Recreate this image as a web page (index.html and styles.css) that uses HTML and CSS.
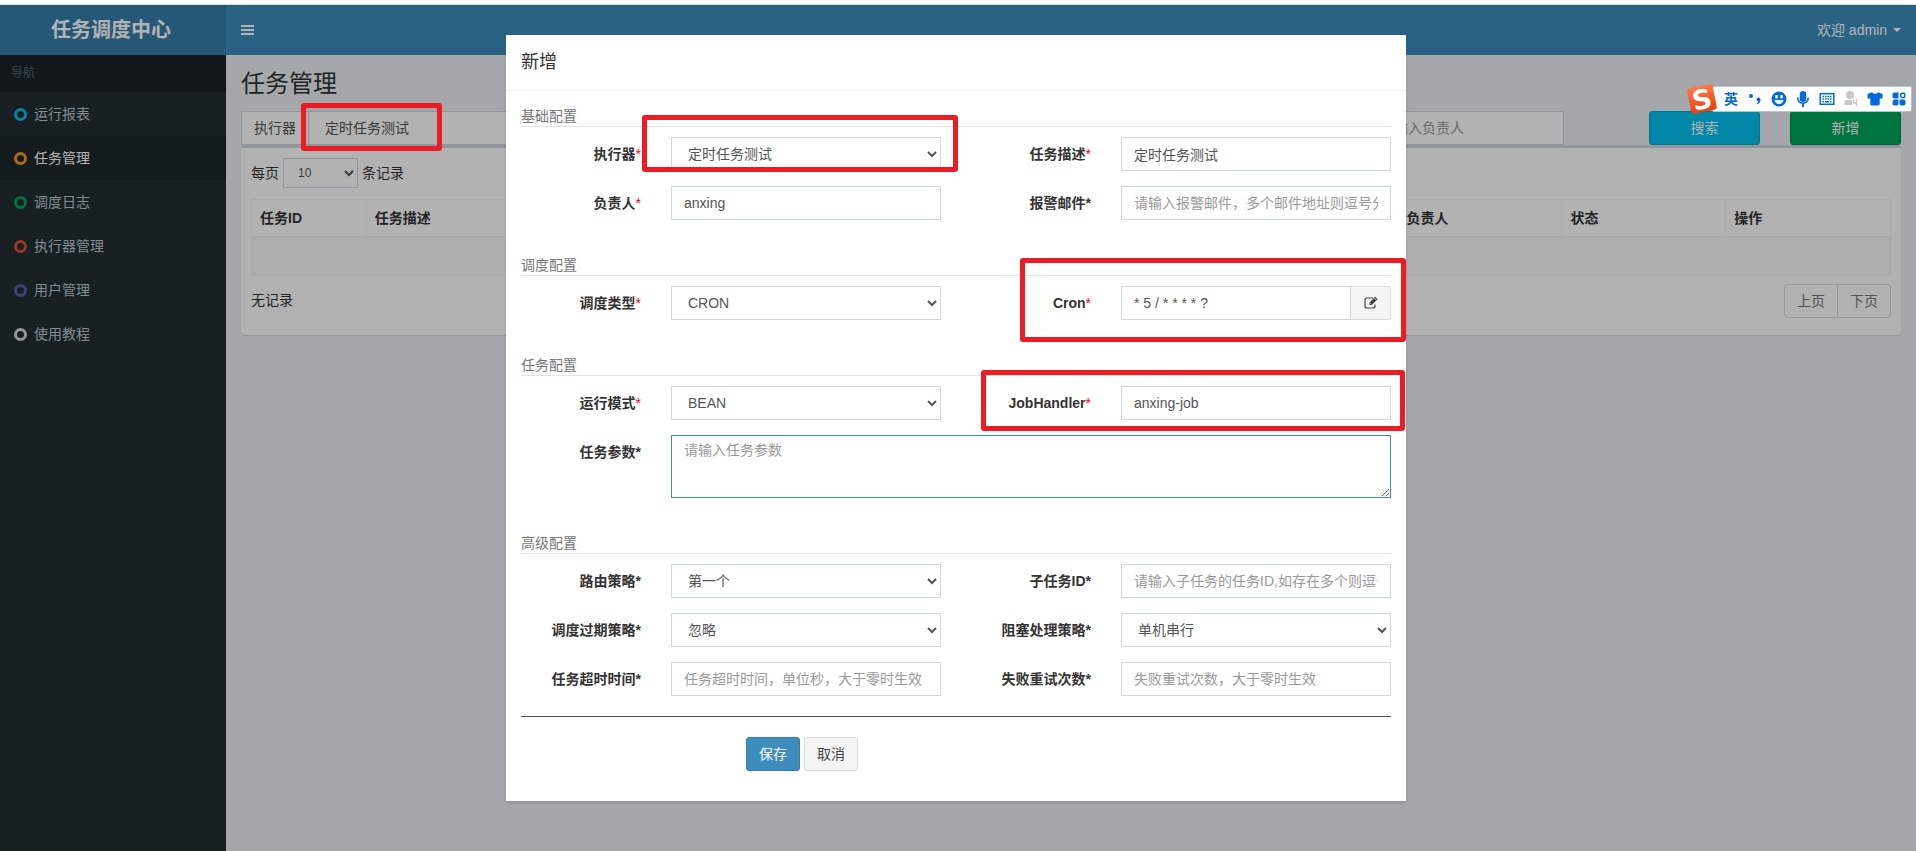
FILE: index.html
```html
<!DOCTYPE html>
<html lang="zh-CN">
<head>
<meta charset="utf-8">
<title>任务调度中心</title>
<link rel="stylesheet" href="styles.css">
</head>
<body>
<div class="app">
  <header class="topbar">
    <a class="logo" href="#">任务调度中心</a>
    <nav class="navbar">
      <button class="toggle" type="button" aria-label="切换导航">
        <svg width="13" height="12" viewBox="0 0 13 12"><path d="M0 1h13v2H0zM0 5h13v2H0zM0 9h13v2H0z" fill="#fff"/></svg>
      </button>
      <a class="user" href="#">欢迎 admin<span class="caret"></span></a>
    </nav>
  </header>

  <div class="columns">
    <aside class="sidebar">
      <div class="nav-head">导航</div>
      <ul class="menu">
        <li><a href="#"><span class="ring aqua"></span>运行报表</a></li>
        <li><a href="#" class="active"><span class="ring yellow"></span>任务管理</a></li>
        <li><a href="#"><span class="ring green"></span>调度日志</a></li>
        <li><a href="#"><span class="ring red"></span>执行器管理</a></li>
        <li><a href="#"><span class="ring purple"></span>用户管理</a></li>
        <li><a href="#"><span class="ring gray"></span>使用教程</a></li>
      </ul>
    </aside>

    <main class="content">
      <h1 class="page-title">任务管理</h1>
      <div class="filters">
        <div class="group">
          <label class="addon" for="f-group">执行器</label>
          <div class="anchor grow">
            <select class="control" id="f-group"><option>定时任务测试</option></select>
            <span class="mark mark-filter"></span>
          </div>
        </div>
        <select class="control" aria-label="状态"><option>全部</option></select>
        <input class="control" type="text" placeholder="请输入任务描述" aria-label="任务描述">
        <input class="control" type="text" placeholder="请输入JobHandler" aria-label="JobHandler">
        <input class="control" type="text" placeholder="请输入负责人" aria-label="负责人">
        <button class="btn info search" type="button">搜索</button>
        <button class="btn success" type="button">新增</button>
      </div>

      <section class="box">
        <div class="length">
          <label for="len">每页</label>
          <select class="control small" id="len"><option>10</option></select>
          <span>条记录</span>
        </div>
        <table class="table">
          <colgroup>
            <col class="c-id"><col class="c-desc"><col class="c-type"><col class="c-mode"><col class="c-std"><col class="c-std"><col class="c-std">
          </colgroup>
          <thead>
            <tr><th>任务ID</th><th>任务描述</th><th>调度类型</th><th>运行模式</th><th>负责人</th><th>状态</th><th>操作</th></tr>
          </thead>
          <tbody><tr><td colspan="7"></td></tr></tbody>
        </table>
        <div class="table-foot">
          <span>无记录</span>
          <div class="pager"><button type="button">上页</button><button type="button">下页</button></div>
        </div>
      </section>
    </main>
  </div>

  <div class="overlay">
    <div class="modal" role="dialog" aria-labelledby="modal-title">
      <h4 class="modal-head" id="modal-title">新增</h4>
      <form class="modal-body">
        <p class="section">基础配置</p>
        <div class="fields">
          <label for="group">执行器<span class="req">*</span></label>
          <div class="anchor">
            <select class="control" id="group"><option>定时任务测试</option></select>
            <span class="mark mark-group"></span>
          </div>
          <label for="desc">任务描述<span class="req">*</span></label>
          <input class="control" id="desc" type="text" value="定时任务测试">
          <label for="author">负责人<span class="req">*</span></label>
          <input class="control" id="author" type="text" value="anxing">
          <label for="mail">报警邮件*</label>
          <input class="control" id="mail" type="text" placeholder="请输入报警邮件，多个邮件地址则逗号分隔">
        </div>

        <p class="section">调度配置</p>
        <div class="fields">
          <label for="stype">调度类型<span class="req">*</span></label>
          <select class="control" id="stype"><option>CRON</option></select>
          <label for="cron">Cron<span class="req">*</span></label>
          <div class="anchor group">
            <input class="control" id="cron" type="text" value="* 5 / * * * * ?">
            <button class="edit" type="button" aria-label="编辑">
              <svg width="14" height="14" viewBox="0 0 14 14" fill="none" stroke="#444">
                <path d="M9 2H3Q1 2 1 4v6Q1 12 3 12h6Q11 12 11 10V8.500" stroke-width="1.200"/>
                <path d="M5.500 6.500l5.700-5.700 2.400 2.400L7.900 8.900H5.500z" fill="#444" stroke="none"/>
                <path d="M6.300 7.300l.9.900M10.300 2.200l1.900 1.900" stroke="#f4f4f4" stroke-width=".7"/>
              </svg>
            </button>
            <span class="mark mark-cron"></span>
          </div>
        </div>

        <p class="section">任务配置</p>
        <div class="fields">
          <label for="mode">运行模式<span class="req">*</span></label>
          <select class="control" id="mode"><option>BEAN</option></select>
          <label for="handler">JobHandler<span class="req">*</span></label>
          <div class="anchor">
            <input class="control" id="handler" type="text" value="anxing-job">
            <span class="mark mark-handler"></span>
          </div>
          <label for="param">任务参数*</label>
          <textarea class="control wide" id="param" placeholder="请输入任务参数"></textarea>
        </div>

        <p class="section">高级配置</p>
        <div class="fields">
          <label for="route">路由策略*</label>
          <select class="control" id="route"><option>第一个</option></select>
          <label for="child">子任务ID*</label>
          <input class="control" id="child" type="text" placeholder="请输入子任务的任务ID,如存在多个则逗号分隔">
          <label for="misfire">调度过期策略*</label>
          <select class="control" id="misfire"><option>忽略</option></select>
          <label for="block">阻塞处理策略*</label>
          <select class="control" id="block"><option>单机串行</option></select>
          <label for="timeout">任务超时时间*</label>
          <input class="control" id="timeout" type="text" placeholder="任务超时时间，单位秒，大于零时生效">
          <label for="retry">失败重试次数*</label>
          <input class="control" id="retry" type="text" placeholder="失败重试次数，大于零时生效">
        </div>

        <hr class="rule">
        <div class="actions">
          <button class="btn primary" type="button">保存</button>
          <button class="btn plain" type="button">取消</button>
        </div>
      </form>
    </div>
  </div>

  <div class="ime">
    <svg class="ime-logo" width="34" height="32" viewBox="0 0 34 32">
      <defs><linearGradient id="flame" x1="0" y1="0" x2="0" y2="1"><stop offset="0" stop-color="#ff7a45"/><stop offset="1" stop-color="#ea3f0c"/></linearGradient></defs>
      <g transform="rotate(-11 17 16)">
        <rect x="4" y="3" width="26" height="26" rx="3" fill="url(#flame)"/>
        <text class="ime-s" x="17" y="26" text-anchor="middle">S</text>
      </g>
    </svg>
    <span class="ime-lang">英</span>
    <svg width="16" height="16" viewBox="0 0 16 16" fill="#006bdc"><circle cx="4" cy="5" r="2"/><path d="M9.500 8.200a2 2 0 1 1 4 .6q0 3.200-3.200 4.700l-.5-.9q1.500-.9 1.600-2.300-1.900 0-1.900-2.100z"/></svg>
    <svg width="16" height="16" viewBox="0 0 16 16"><circle cx="8" cy="8" r="7.500" fill="#006bdc"/><rect x="4.300" y="4" width="2.400" height="3.400" fill="#fff"/><rect x="9.300" y="4" width="2.400" height="3.400" fill="#fff"/><path d="M3.500 9h9q-.8 4-4.500 4T3.500 9z" fill="#fff"/></svg>
    <svg width="16" height="16" viewBox="0 0 16 16"><rect x="4.800" y="0" width="6.400" height="11" rx="3.200" fill="#006bdc"/><path d="M2.800 6.500q0 5.700 5.200 5.700t5.200-5.700" fill="none" stroke="#006bdc" stroke-width="1.600"/><path d="M7 12h2v4H7z" fill="#006bdc"/></svg>
    <svg width="16" height="16" viewBox="0 0 16 16"><rect x="1.200" y="2.700" width="13.600" height="10.600" fill="none" stroke="#006bdc" stroke-width="1.500"/><path d="M3.500 5.500h9M3.500 8h9" stroke="#006bdc" stroke-width="1.600" stroke-dasharray="1.500 1"/><path d="M3.500 10.800h1.500M6 10.800h4M11 10.800h1.500" stroke="#006bdc" stroke-width="1.500"/></svg>
    <svg width="16" height="16" viewBox="0 0 16 16" fill="#c8c8c8"><circle cx="7" cy="4" r="4"/><path d="M1.500 14v-2Q1.500 9 4.500 9H9v5z"/><path d="M10.500 8v4h3V8M13.500 12v3" fill="none" stroke="#c8c8c8" stroke-width="1.300"/></svg>
    <svg width="16" height="16" viewBox="0 0 16 16" fill="#006bdc"><path d="M5 1.300Q8 4.300 11 1.300L15.500 3v4.500h-2.800V13q0 1.500-1.500 1.500H4.800q-1.500 0-1.500-1.500V7.500H.5V3z"/></svg>
    <svg width="16" height="16" viewBox="0 0 16 16" fill="#006bdc"><path d="M3.500 1.500h4v6h-4q-2 0-2-2v-2q0-2 2-2zM1.500 10.500q0-2 2-2h4v4q0 2-2 2h-2q-2 0-2-2zM8.500 8.500h4q2 0 2 2v2q0 2-2 2h-2q-2 0-2-2z"/><rect x="9.800" y="2.200" width="4" height="4.400" rx="1.300" fill="none" stroke="#006bdc" stroke-width="1.500"/></svg>
  </div>
</div>
</body>
</html>
```
FILE: styles.css
```css
* { box-sizing: border-box; }

body {
  margin: 0;
  border-top: 4px solid #fff;
  font: 14px/20px "Liberation Sans", "Noto Sans CJK SC", sans-serif;
  color: #333;
  background: #fff;
}

button, input, select, textarea { font: inherit; }
a { text-decoration: none; }

.app {
  position: relative;
  display: flex;
  flex-direction: column;
  min-height: calc(100vh - 4px);
  border-top: 1px solid #dcdcdc;
}

/* Header */
.topbar { display: flex; height: 50px; }
.logo {
  flex: 0 0 226px;
  padding-right: 4px;
  background: #367fa9;
  color: #fff;
  font-size: 20px;
  font-weight: bold;
  line-height: 50px;
  text-align: center;
}
.navbar {
  flex: 1;
  display: flex;
  align-items: center;
  justify-content: space-between;
  padding: 0 15px;
  background: #3c8dbc;
}
.toggle { display: flex; padding: 0; border: 0; background: none; }
.user { display: flex; align-items: center; gap: 6px; color: #fff; }
.caret { border: 4px solid transparent; border-top-color: #fff; border-bottom: 0; }

.columns { flex: 1; display: flex; }

/* Sidebar */
.sidebar { flex: 0 0 226px; background: #222d32; }
.nav-head {
  height: 37px;
  padding: 0 11px;
  background: #1a2226;
  color: #4b646f;
  font-size: 12px;
  line-height: 36px;
}
.menu { margin: 0; padding: 0; list-style: none; }
.menu a {
  display: flex;
  align-items: center;
  gap: 7px;
  height: 44px;
  padding: 0 14px;
  color: #b8c7ce;
}
.menu .active { background: #1e282c; color: #fff; }
.ring { width: 13px; height: 13px; border: 3px solid; border-radius: 50%; }
.aqua { color: #00c0ef; }
.yellow { color: #f39c12; }
.green { color: #00a65a; }
.red { color: #dd4b39; }
.purple { color: #605ca8; }
.gray { color: #d2d6de; }

/* Content */
.content { flex: 1; min-width: 0; padding: 16px 15px 0; background: #ecf0f5; }
.page-title { margin: 0 0 14px; font-size: 24px; font-weight: normal; line-height: 26px; }

.control {
  display: block;
  width: 100%;
  height: 34px;
  padding: 6px 12px;
  border: 1px solid #d2d6de;
  border-radius: 0;
  background: #fff;
  color: #555;
}
.control::placeholder { color: #999; opacity: 1; }

.group { display: flex; }
.anchor { position: relative; }
.grow { flex: 1; }
.addon {
  padding: 6px 12px;
  border: 1px solid #d2d6de;
  border-right: 0;
  background: #fff;
  color: #555;
}

.filters {
  display: grid;
  grid-template-columns: 400fr 190fr 208fr 208fr 197fr 166fr 111fr;
  gap: 30px;
}
.search { margin-left: 55px; }

.btn {
  height: 34px;
  padding: 0 12px;
  border: 1px solid;
  border-radius: 3px;
  color: #fff;
}
.info { background: #00c0ef; border-color: #00acd6; }
.success { background: #00a65a; border-color: #008d4c; }
.primary { background: #3c8dbc; border-color: #367fa9; }
.plain { background: #f4f4f4; border-color: #ddd; color: #444; }

.box {
  padding: 10px;
  border-top: 3px solid #d2d6de;
  border-radius: 3px;
  background: #fff;
  box-shadow: 0 1px 1px rgba(0, 0, 0, .1);
}
.length { display: flex; align-items: center; gap: 4px; margin-bottom: 11px; }
.small { width: 75px; height: 30px; padding: 5px 10px; font-size: 12px; }

.table {
  width: 100%;
  table-layout: fixed;
  border-collapse: separate;
  border-spacing: 0;
  border: 1px solid #f4f4f4;
}
.table th {
  height: 38px;
  padding: 0 8px;
  border-right: 1px solid #f4f4f4;
  border-bottom: 2px solid #f4f4f4;
  text-align: left;
}
.table th:last-child { border-right: 0; }
.table td { height: 37px; background: #f9f9f9; }
.c-id { width: 7%; }
.c-desc { width: 25%; }
.c-type, .c-mode { width: 19%; }
.c-std { width: 10%; }

.table-foot { display: flex; justify-content: space-between; padding: 8px 0 7px; }
.table-foot > span { line-height: 32px; }
.pager { display: flex; }
.pager button {
  height: 34px;
  padding: 0 12px;
  border: 1px solid #ddd;
  border-radius: 4px 0 0 4px;
  background: none;
  color: #777;
}
.pager button + button { border-left: 0; border-radius: 0 4px 4px 0; }

/* Dialog */
.overlay {
  position: absolute;
  inset: 0;
  z-index: 10;
  padding: 30px 4px 30px 0;
  background: rgba(0, 0, 0, .3);
}
.modal {
  max-width: 900px;
  margin: 0 auto;
  background: #fff;
  box-shadow: 0 2px 3px rgba(0, 0, 0, .125);
}
.modal-head {
  margin: 0;
  padding: 15px;
  border-bottom: 1px solid #f4f4f4;
  font-size: 18px;
  font-weight: normal;
  line-height: 25px;
}
.modal-body { padding: 15px 15px 30px; }
.section { margin: 0 0 10px; border-bottom: 1px solid #e5e5e5; color: #777; }
.fields {
  display: grid;
  grid-template-columns: 4fr 9fr 4fr 9fr;
  gap: 15px 30px;
}
.fields + .section { margin-top: 35px; }
.fields label { padding-top: 7px; font-weight: bold; text-align: right; white-space: nowrap; }
.fields .control { min-width: 0; }
.req { color: #f00; font-weight: normal; }
.wide { grid-column: span 3; height: 63px; padding: 4px 12px; border-color: #3c8dbc; }
.edit {
  display: flex;
  flex: 0 0 40px;
  align-items: center;
  justify-content: center;
  height: 34px;
  padding: 0;
  border: 1px solid #ddd;
  border-left: 0;
  border-radius: 0 3px 3px 0;
  background: #f4f4f4;
}
.rule { margin: 20px 0; border: 0; border-top: 1px solid #555; }
.actions { display: flex; gap: 4px; padding-left: 225px; }

/* Highlight frames */
.mark { position: absolute; z-index: 20; border: 5px solid #ed1c24; border-radius: 3px; pointer-events: none; }
.mark-filter { top: -8px; left: -7px; width: 141px; height: 48px; }
.mark-group { inset: -22px -17px -1px -29px; }
.mark-cron { inset: -28px -15px -22px -101px; }
.mark-handler { inset: -16px -14px -11px -140px; }

/* Input method bar */
.ime {
  position: absolute;
  top: 81px;
  right: 4px;
  z-index: 30;
  display: flex;
  align-items: center;
  gap: 8px;
  height: 26px;
  padding: 0 4px 0 0;
  border: 1px solid #a9c6e8;
  border-radius: 2px;
  background: #fff;
}
.ime-logo { margin: 0 -4px 0 -28px; overflow: visible; }
.ime-s { fill: #fff; font: bold 27px "DejaVu Sans", sans-serif; }
.ime-lang { width: 16px; color: #006bdc; font-weight: bold; text-align: center; }
```
